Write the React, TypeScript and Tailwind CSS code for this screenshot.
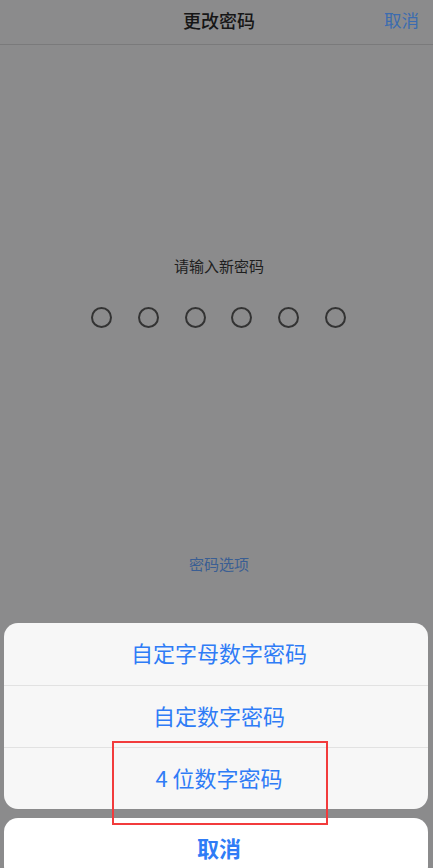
import React from 'react';

const font = { fontFamily: '"Noto Sans CJK SC", "Noto Sans", sans-serif' };

/* ── Passcode dots ──────────────────────────────── */
function Dots() {
  return (
    <div className="mt-[29px] flex justify-center gap-[25.7px] pl-[4px]">
      {[0, 1, 2, 3, 4, 5].map((i) => (
        <div key={i} className="h-[21px] w-[21px] rounded-full border-2 border-[#333333]" />
      ))}
    </div>
  );
}

const options = ['自定字母数字密码', '自定数字密码', '4 位数字密码'];

export default function App() {
  return (
    <div className="relative h-[868px] w-[433px] overflow-hidden bg-[#8b8b8c]" style={font}>
      {/* nav bar */}
      <div className="grid h-[45px] grid-cols-[1fr_auto_1fr] items-center border-b border-[#7a7a7b] pb-[4px] pl-[5px]">
        <div />
        <div className="text-[18px] font-medium leading-none text-[#161616]">更改密码</div>
        <div className="pr-[14px] text-right text-[17.5px] leading-none text-[#3b6cb0]">取消</div>
      </div>

      <div className="mt-[210px] pl-[5px] text-center text-[15px] leading-[22px] text-[#1e1e1e]">
        请输入新密码
      </div>
      <div className="pt-px">
        <Dots />
      </div>
      <div className="mt-[225px] pl-[5px] text-center text-[15px] leading-[22px] text-[#3a5e93]">
        密码选项
      </div>

      {/* action sheet */}
      <div className="mt-[48px] pl-[4px] pr-[5px]">
        <div className="overflow-hidden rounded-[14px] bg-[#f7f7f7]">
          {options.map((o, i) => (
            <div
              key={o}
              className={`flex h-[62px] items-center justify-center pb-[3px] pl-[6px] text-[22px] text-[#2f7cf6] ${
                i > 0 ? 'border-t border-[#e2e2e2]' : ''
              }`}
            >
              {o}
            </div>
          ))}
        </div>
        <div className="mt-[9px] flex h-[62px] items-center justify-center rounded-[14px] bg-white pb-[3px] pl-[6px] text-[22px] font-semibold text-[#2f7cf6]">
          取消
        </div>
      </div>

      {/* annotation */}
      <div className="absolute left-[112px] top-[741px] h-[84px] w-[216px] border-2 border-[#f23b3c]" />
    </div>
  );
}
